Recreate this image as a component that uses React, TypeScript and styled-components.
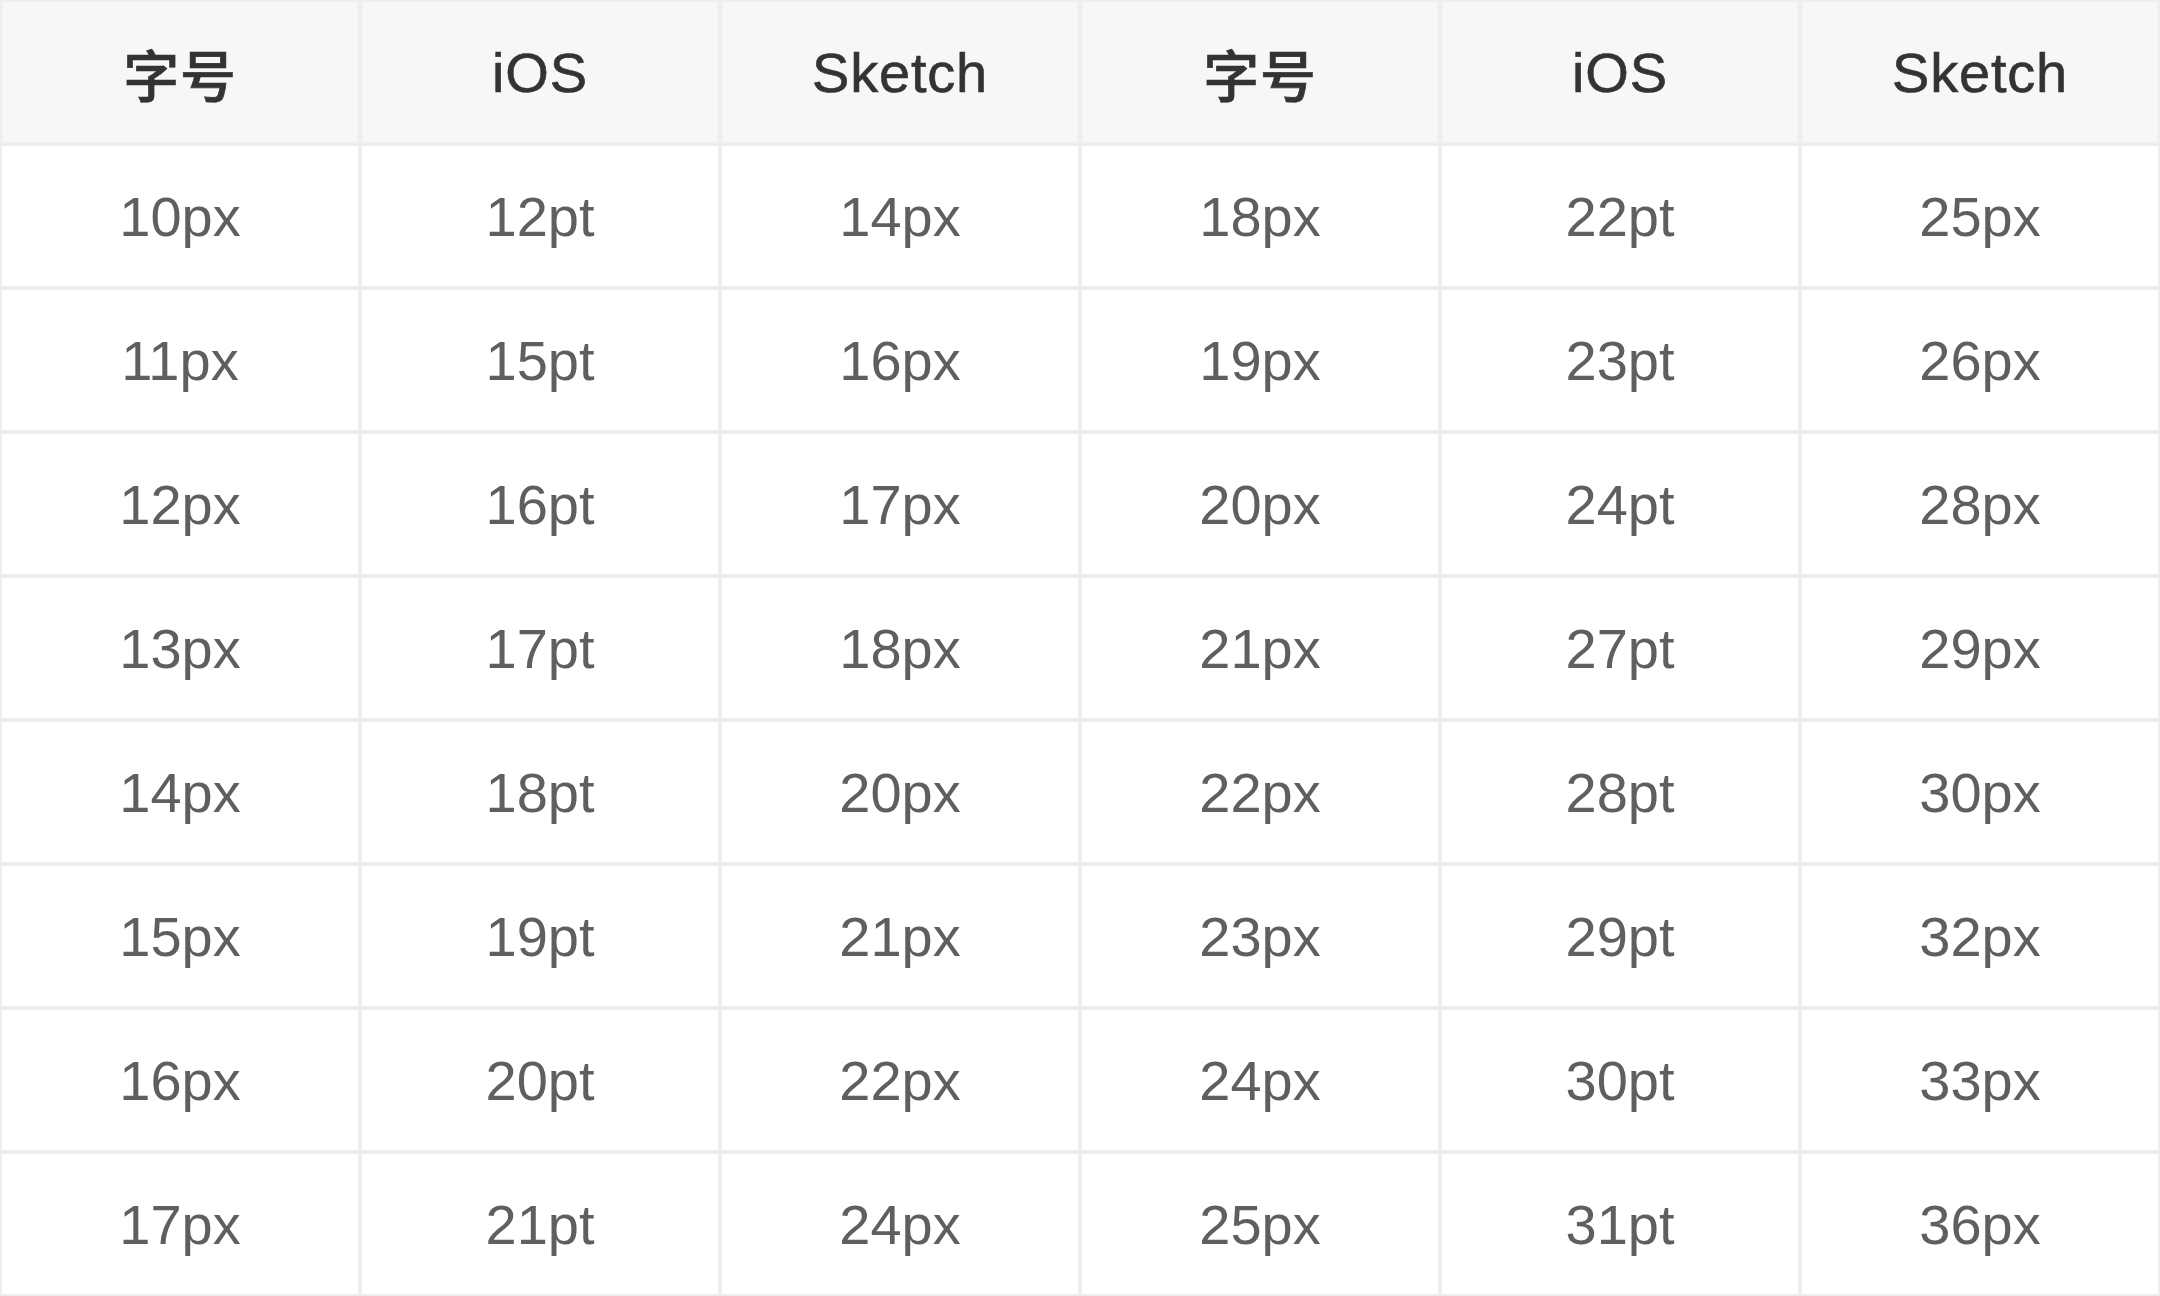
import React from "react";
import styled, { createGlobalStyle } from "styled-components";

const Global = createGlobalStyle`
  html, body { margin: 0; padding: 0; background: #ffffff; }
  body { font-family: "Liberation Sans", "Noto Sans CJK SC", sans-serif; }
`;

const Table = styled.table`
  width: 2160px;
  table-layout: fixed;
  border-collapse: separate;
  border-spacing: 0;
`;

const HeadCell = styled.th`
  height: 140px;
  padding: 0;
  border: 2px solid #eeeeee;
  background: #f7f7f7;
  color: #333333;
  font-family: "Liberation Sans", "Noto Sans CJK SC", sans-serif;
  font-size: 56px;
  font-weight: 500;
  letter-spacing: 0.8px;
  -webkit-text-stroke: 0.6px #333333;
  text-align: center;
  vertical-align: middle;
`;

const Cell = styled.td`
  height: 140px;
  padding: 0;
  border: 2px solid #eeeeee;
  background: #ffffff;
  color: #5f5f5f;
  font-family: "Liberation Sans", sans-serif;
  font-size: 56px;
  font-weight: 400;
  text-align: center;
  vertical-align: middle;
  letter-spacing: 0;
`;

const headers = ["字号", "iOS", "Sketch", "字号", "iOS", "Sketch"];

const rows: string[][] = [
  ["10px", "12pt", "14px", "18px", "22pt", "25px"],
  ["11px", "15pt", "16px", "19px", "23pt", "26px"],
  ["12px", "16pt", "17px", "20px", "24pt", "28px"],
  ["13px", "17pt", "18px", "21px", "27pt", "29px"],
  ["14px", "18pt", "20px", "22px", "28pt", "30px"],
  ["15px", "19pt", "21px", "23px", "29pt", "32px"],
  ["16px", "20pt", "22px", "24px", "30pt", "33px"],
  ["17px", "21pt", "24px", "25px", "31pt", "36px"],
];

export default function App() {
  return (
    <>
      <Global />
      <Table>
        <thead>
          <tr>
            {headers.map((h, i) => (
              <HeadCell key={i}>{h}</HeadCell>
            ))}
          </tr>
        </thead>
        <tbody>
          {rows.map((r, ri) => (
            <tr key={ri}>
              {r.map((c, ci) => (
                <Cell key={ci}>{c}</Cell>
              ))}
            </tr>
          ))}
        </tbody>
      </Table>
    </>
  );
}
